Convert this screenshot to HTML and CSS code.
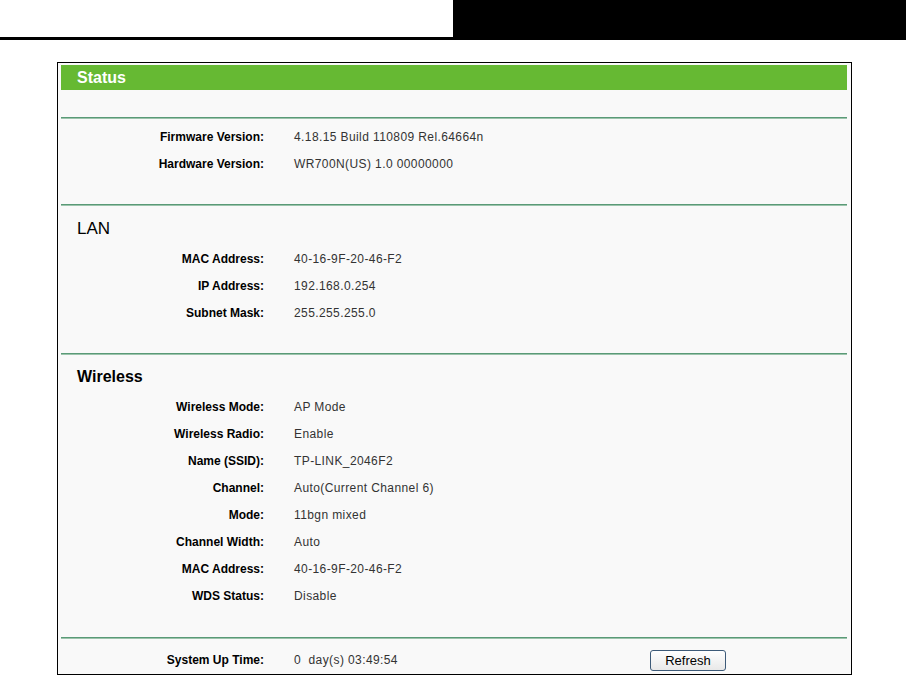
FILE: index.html
```html
<!DOCTYPE html>
<html>
<head>
<meta charset="utf-8">
<title>Status</title>
<link rel="stylesheet" href="styles.css">
</head>
<body>
<div class="topbar">
  <div class="topbar-left"></div>
  <div class="topbar-right"></div>
</div>
<div class="panel">
  <div class="panel-title">Status</div>
  <div class="spacer"></div>
  <div class="rule"></div>
  <div class="section section-first">
    <div class="row"><div class="label">Firmware Version:</div><div class="value">4.18.15 Build 110809 Rel.64664n</div></div>
    <div class="row"><div class="label">Hardware Version:</div><div class="value">WR700N(US) 1.0 00000000</div></div>
  </div>
  <div class="rule"></div>
  <div class="section">
    <div class="heading heading-lan">LAN</div>
    <div class="row"><div class="label">MAC Address:</div><div class="value">40-16-9F-20-46-F2</div></div>
    <div class="row"><div class="label">IP Address:</div><div class="value">192.168.0.254</div></div>
    <div class="row"><div class="label">Subnet Mask:</div><div class="value">255.255.255.0</div></div>
  </div>
  <div class="rule"></div>
  <div class="section section-wireless">
    <div class="heading heading-wireless">Wireless</div>
    <div class="row"><div class="label">Wireless Mode:</div><div class="value">AP Mode</div></div>
    <div class="row"><div class="label">Wireless Radio:</div><div class="value">Enable</div></div>
    <div class="row"><div class="label">Name (SSID):</div><div class="value">TP-LINK_2046F2</div></div>
    <div class="row"><div class="label">Channel:</div><div class="value">Auto(Current Channel 6)</div></div>
    <div class="row"><div class="label">Mode:</div><div class="value">11bgn mixed</div></div>
    <div class="row"><div class="label">Channel Width:</div><div class="value">Auto</div></div>
    <div class="row"><div class="label">MAC Address:</div><div class="value">40-16-9F-20-46-F2</div></div>
    <div class="row"><div class="label">WDS Status:</div><div class="value">Disable</div></div>
  </div>
  <div class="rule"></div>
  <div class="uptime">
    <div class="label">System Up Time:</div>
    <div class="value">0&nbsp; day(s) 03:49:54</div>
    <button class="btn" type="button">Refresh</button>
  </div>
</div>
</body>
</html>
```
FILE: styles.css
```css
html, body {
  margin: 0;
  padding: 0;
  background: #ffffff;
}
body {
  font-family: "Liberation Sans", Arial, sans-serif;
  font-size: 12px;
  color: #000;
}
.topbar {
  display: flex;
  height: 40px;
}
.topbar-left {
  width: 453px;
  box-sizing: border-box;
  border-bottom: 3px solid #000;
}
.topbar-right {
  flex: 1;
  background: #000;
}
.panel {
  box-sizing: border-box;
  width: 795px;
  margin: 22px 0 0 57px;
  border: 1px solid #000;
  padding: 2px 4px 0 3px;
  background: #f9f9f9;
}
.panel-title {
  height: 25px;
  line-height: 25px;
  background: #66b933;
  color: #fff;
  font-weight: bold;
  font-size: 16px;
  padding-left: 16px;
}
.spacer {
  height: 27px;
}
.rule {
  border-top: 1px solid #5a9a77;
  border-bottom: 1px solid #9cc4ac;
}
.section {
  padding-bottom: 26px;
}
.section-first {
  padding-top: 5px;
}
.section-wireless {
  padding-bottom: 27px;
}
.heading {
  height: 20px;
  line-height: 20px;
  padding-left: 16px;
  color: #000;
}
.heading-lan {
  font-size: 17px;
  padding-top: 13px;
  padding-bottom: 7px;
}
.heading-wireless {
  font-size: 16px;
  font-weight: bold;
  padding-top: 12px;
  padding-bottom: 7px;
}
.row {
  display: grid;
  grid-template-columns: 203px 1fr;
  column-gap: 30px;
  height: 27px;
  line-height: 27px;
}
.label {
  text-align: right;
  font-weight: bold;
  color: #000;
}
.value {
  color: #333;
  letter-spacing: 0.4px;
}
.uptime {
  display: grid;
  grid-template-columns: 203px 326px 76px;
  column-gap: 30px;
  align-items: center;
  height: 27px;
  line-height: 27px;
  margin-top: 8px;
}
.btn {
  width: 76px;
  height: 21px;
  padding: 0;
  font-family: "Liberation Sans", Arial, sans-serif;
  font-size: 13px;
  line-height: 19px;
  color: #000;
  border: 1px solid #3d5a78;
  border-radius: 3px;
  background: linear-gradient(#ffffff, #e8e8e8);
}
```
